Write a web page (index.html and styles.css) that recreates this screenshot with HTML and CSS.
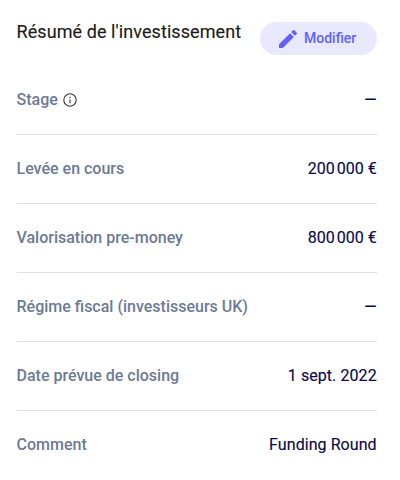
FILE: index.html
```html
<!DOCTYPE html>
<html lang="fr">
<head>
<meta charset="utf-8">
<title>Résumé de l'investissement</title>
<link rel="stylesheet" href="styles.css">
</head>
<body>
<section class="summary">
  <header class="summary-header">
    <h2>Résumé de l'investissement</h2>
    <button class="edit" type="button">
      <svg viewBox="0 0 24 24" aria-hidden="true"><path d="M3 17.25V21h3.75L17.81 9.94l-3.75-3.75L3 17.25zM20.71 7.04a1 1 0 0 0 0-1.41l-2.34-2.34a1 1 0 0 0-1.41 0l-1.83 1.83 3.75 3.75 1.83-1.83z"/></svg>
      <span>Modifier</span>
    </button>
  </header>
  <dl class="rows">
    <div class="row"><dt>Stage <svg class="info" viewBox="0 0 16 16" aria-hidden="true"><circle cx="8" cy="8" r="6.2"/><path d="M8 7.2v4M8 4.8v1.2"/></svg></dt><dd class="empty">—</dd></div>
    <div class="row"><dt>Levée en cours</dt><dd class="amount">200&#8239;000&nbsp;€</dd></div>
    <div class="row"><dt>Valorisation pre-money</dt><dd class="amount">800&#8239;000&nbsp;€</dd></div>
    <div class="row"><dt>Régime fiscal (investisseurs UK)</dt><dd class="empty">—</dd></div>
    <div class="row"><dt>Date prévue de closing</dt><dd>1 sept. 2022</dd></div>
    <div class="row"><dt>Comment</dt><dd>Funding Round</dd></div>
  </dl>
</section>
</body>
</html>
```
FILE: styles.css
```css
* {
  box-sizing: border-box;
}

body {
  margin: 0;
  background: #fff;
  font-family: Roboto, "Liberation Sans", sans-serif;
}

.summary {
  padding: 22px 23px 0 16.5px;
}

.summary-header {
  display: flex;
  justify-content: space-between;
  align-items: flex-start;
  height: 44px;
}

h2 {
  margin: 0;
  font-size: 18px;
  line-height: 20px;
  font-weight: 400;
  letter-spacing: 0.08px;
  color: #1c1c1c;
  -webkit-text-stroke: 0.15px currentColor;
}

.edit {
  display: flex;
  align-items: center;
  gap: 4px;
  width: 117px;
  height: 33px;
  padding: 0 16px;
  border: 0;
  border-radius: 17px;
  background: #e8e8ff;
  color: #6161ff;
  font: 500 14px/20px Roboto, sans-serif;
}

.edit svg {
  width: 24px;
  height: 24px;
  flex: none;
  fill: currentColor;
}

.edit span {
  position: relative;
  top: -1px;
}

.rows {
  margin: 0;
}

.row {
  display: flex;
  justify-content: space-between;
  align-items: center;
  height: 69px;
  border-bottom: 1px solid #e0e0e0;
  font-size: 16px;
  line-height: 24px;
  font-weight: 500;
}

.row:last-child {
  border-bottom-color: transparent;
}

dt {
  display: flex;
  align-items: center;
  gap: 4px;
  color: #6c7a96;
}

dd {
  margin: 0;
  padding-right: 0.3px;
  font-weight: 400;
  letter-spacing: 0.07px;
  color: #09094d;
  -webkit-text-stroke: 0.15px currentColor;
}

.amount {
  letter-spacing: 0.2px;
}

.empty {
  padding-right: 0.5px;
  font-weight: 500;
  letter-spacing: 0;
  -webkit-text-stroke: 0;
}

.info {
  width: 16px;
  height: 16px;
  fill: none;
  stroke: #333;
  stroke-width: 1.1;
}
```
